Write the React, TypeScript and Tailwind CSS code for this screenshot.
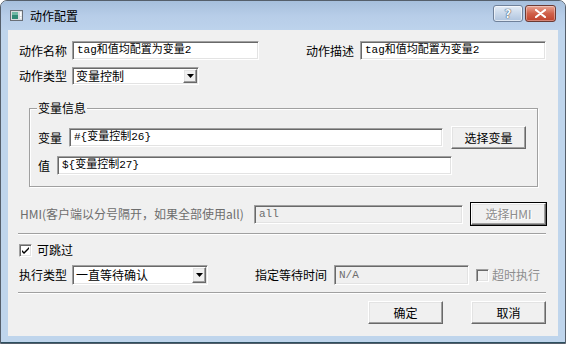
import React from 'react';

const sans = "font-['Noto_Sans_CJK_SC',sans-serif]";
const mono = "font-['Liberation_Mono','Noto_Sans_CJK_SC',monospace]";

const sunken =
  'border border-t-[#a0a0a0] border-l-[#a0a0a0] border-r-white border-b-white shadow-[inset_1px_1px_0_#696969,inset_-1px_-1px_0_#e3e3e3]';
const raised =
  'border border-t-white border-l-white border-r-[#696969] border-b-[#696969] shadow-[inset_-1px_-1px_0_#a0a0a0,inset_1px_1px_0_#e3e3e3]';

const TextBox: React.FC<{ className: string; value: string; disabled?: boolean }> = ({ className, value, disabled }) => (
  <div
    className={`${sunken} ${className} ${
      disabled ? 'bg-[#f0f0f0] text-[#6d6d6d]' : 'bg-white text-black'
    } flex items-center pl-[4px] text-[11px] leading-[13px] ${mono} whitespace-nowrap overflow-hidden`}
  >
    {value}
  </div>
);

const Combo: React.FC<{ className: string; value: string }> = ({ className, value }) => (
  <div className={`${sunken} ${className} bg-white flex items-stretch p-[1px]`}>
    <div className={`flex-1 flex items-center pl-[2px] text-[12px] leading-[14px] ${sans} text-black`}>{value}</div>
    <div className={`${raised} w-[14px] bg-[#f0f0f0] flex items-center justify-center`}>
      <svg width="7" height="4" viewBox="0 0 7 4">
        <path d="M0 0h7L3.5 4z" fill="#000" />
      </svg>
    </div>
  </div>
);

const Button: React.FC<{ className: string; label: string; disabled?: boolean; dark?: boolean }> = ({
  className,
  label,
  disabled,
  dark,
}) => {
  const inner = (
    <div
      className={`${raised} w-full h-full bg-[#f0f0f0] flex items-center justify-center text-[12px] leading-[14px] ${sans} ${
        disabled ? 'text-[#8d8d8d] [text-shadow:1px_1px_0_#fff]' : 'text-black'
      }`}
    >
      {label}
    </div>
  );
  if (dark) return <div className={`${className} border border-black`}>{inner}</div>;
  return <div className={className}>{inner}</div>;
};

const CheckBox: React.FC<{ checked?: boolean; disabled?: boolean }> = ({ checked, disabled }) => (
  <div className={`${sunken} w-[13px] h-[13px] ${disabled ? 'bg-[#f0f0f0]' : 'bg-white'} flex items-center justify-center`}>
    {checked && (
      <svg width="7" height="7" viewBox="0 0 7 7">
        <path d="M0 3l2 2 5-5v2L2 7 0 5z" fill="#000" />
      </svg>
    )}
  </div>
);

const Separator: React.FC = () => (
  <div className="ml-[10px] w-[528px] h-[2px] border-t border-t-[#a0a0a0] border-b border-b-white" />
);

const App: React.FC = () => {
  return (
    <div className="w-[566px] h-[344px] bg-[#bfd5ec] border border-[#555f6b] rounded-t-[7px] flex flex-col overflow-hidden">
      {/* title bar */}
      <div className="h-[29px] flex items-center bg-gradient-to-b from-[#a6bfdc] via-[#b7cde8] to-[#bdd3ec] relative">
        <svg className="ml-[9px]" width="13" height="11" viewBox="0 0 13 11">
          <rect x="0.5" y="0.5" width="12" height="10" fill="#d8dcdf" stroke="#6a7078" />
          <rect x="2" y="2" width="6" height="7" fill="#2f8a76" />
          <rect x="2" y="2" width="6" height="3" fill="#6fb7a4" />
          <rect x="10" y="2" width="1.5" height="4" fill="#fff" />
          <rect x="10" y="7" width="1.5" height="1.5" fill="#fff" />
        </svg>
        <span className={`ml-[7px] text-[12px] leading-[14px] text-black ${sans}`}>动作配置</span>
        <div className="ml-auto mr-[9px] mt-[-4px] flex gap-[2px]">
          <div className="w-[30px] h-[17px] rounded-[3px] border border-[#6f819a] bg-gradient-to-b from-[#e4ecf6] via-[#c9d8ea] to-[#afc4de] flex items-center justify-center shadow-[inset_0_0_0_1px_rgba(255,255,255,0.6)]">
            <span className="text-[12px] leading-[12px] font-bold text-[#f4f7fb] [text-shadow:0_0_1px_#2c3e55,0_0_1px_#2c3e55] font-['DejaVu_Sans',sans-serif]">?</span>
          </div>
          <div className="w-[31px] h-[17px] rounded-[3px] border border-[#6b3a33] bg-gradient-to-b from-[#e8a493] via-[#d0614a] to-[#c0422c] flex items-center justify-center shadow-[inset_0_0_0_1px_rgba(255,255,255,0.35)]">
            <svg width="11" height="9" viewBox="0 0 11 9">
              <path d="M1 1l9 7M10 1L1 8" stroke="#fff" strokeWidth="2.2" strokeLinecap="round" />
            </svg>
          </div>
        </div>
      </div>

      {/* client area */}
      <div className={`mx-[7px] h-[306px] bg-[#f0f0f0] flex flex-col text-[12px] leading-[14px] text-black ${sans}`}>
        {/* row 1 */}
        <div className="mt-[11px] ml-[11px] h-[19px] flex items-center">
          <span className="w-[53px]">动作名称</span>
          <TextBox className="w-[187px] h-[19px]" value="tag和值均配置为变量2" />
          <span className="ml-[47px] w-[54px]">动作描述</span>
          <TextBox className="w-[186px] h-[19px]" value="tag和值均配置为变量2" />
        </div>

        {/* row 2 */}
        <div className="mt-[7px] ml-[11px] h-[18px] flex items-center">
          <span className="w-[53px]">动作类型</span>
          <Combo className="w-[127px] h-[18px]" value="变量控制" />
        </div>

        {/* group */}
        <div className="mt-[23px] ml-[21px] w-[509px] h-[79px] border border-[#a0a0a0] shadow-[inset_1px_1px_0_#fff,1px_1px_0_#fff] relative flex flex-col">
          <span className="absolute left-[7px] top-[-8px] px-[1px] bg-[#f0f0f0]">变量信息</span>
          <div className="mt-[17px] ml-[8px] h-[23px] flex items-center">
            <span className="w-[31px]">变量</span>
            <TextBox className="w-[374px] h-[19px]" value="#{变量控制26}" />
            <Button className="ml-[8px] w-[75px] h-[23px]" label="选择变量" />
          </div>
          <div className="mt-[7px] ml-[8px] h-[19px] flex items-center">
            <span className="w-[19px]">值</span>
            <TextBox className="w-[395px] h-[19px]" value="${变量控制27}" />
          </div>
        </div>

        {/* HMI */}
        <div className="mt-[15px] ml-[12px] h-[24px] flex items-center">
          <span className="w-[234px] text-[#6d6d6d] whitespace-nowrap">HMI(客户端以分号隔开，如果全部使用all)</span>
          <TextBox className="w-[209px] h-[19px]" value="all" disabled />
          <Button className="ml-[7px] w-[77px] h-[24px]" label="选择HMI" disabled dark />
        </div>

        <div className="mt-[7px]">
          <Separator />
        </div>

        {/* skip */}
        <div className="mt-[8px] ml-[11px] h-[14px] flex items-center">
          <CheckBox checked />
          <span className="ml-[5px]">可跳过</span>
        </div>

        {/* exec */}
        <div className="mt-[8px] ml-[11px] h-[20px] flex items-center">
          <span className="w-[53px]">执行类型</span>
          <Combo className="w-[136px] h-[20px]" value="一直等待确认" />
          <span className="ml-[47px] w-[79px] whitespace-nowrap">指定等待时间</span>
          <TextBox className="w-[135px] h-[20px]" value="N/A" disabled />
          <div className="ml-[7px]">
            <CheckBox disabled />
          </div>
          <span className="ml-[3px] text-[#8d8d8d]">超时执行</span>
        </div>

        <div className="mt-[7px]">
          <Separator />
        </div>

        {/* buttons */}
        <div className="mt-[7px] h-[23px] flex">
          <Button className="ml-[360px] w-[75px] h-[23px]" label="确定" />
          <Button className="ml-[28px] w-[75px] h-[23px]" label="取消" />
        </div>
      </div>

      {/* bottom frame */}
      <div className="flex-1 border-b border-b-[#2d4f5f]" />
    </div>
  );
};

export default App;
